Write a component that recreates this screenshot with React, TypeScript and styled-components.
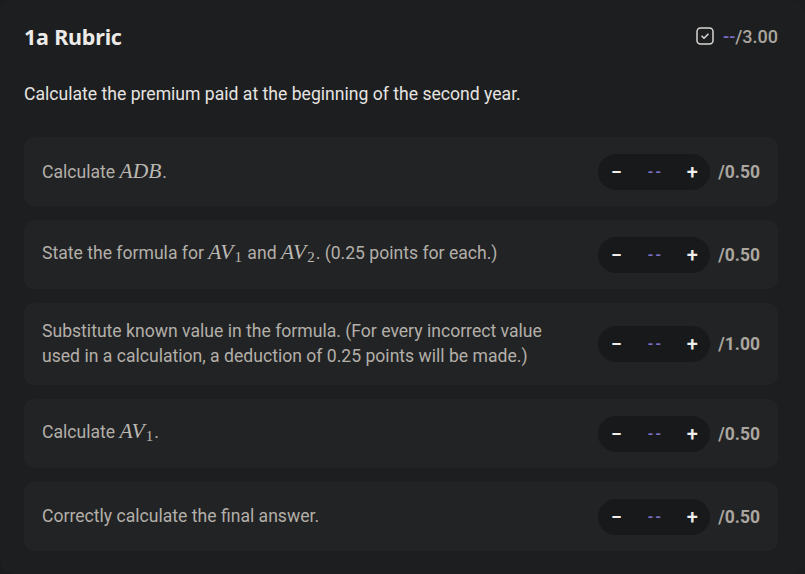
import React from "react";
import styled, { createGlobalStyle } from "styled-components";

interface ICriterion {
  text: React.ReactNode;
  max: string;
}

const GlobalStyle = createGlobalStyle`
  html, body {
    margin: 0;
    padding: 0;
    background: #1b1c1e;
  }
  body {
    font-family: Roboto, "Liberation Sans", sans-serif;
  }
`;

const Var: React.FC<{ name: string; sub?: string }> = ({ name, sub }) => (
  <MathVar>
    {name}
    {sub && <Sub>{sub}</Sub>}
  </MathVar>
);

const criteria: ICriterion[] = [
  {
    text: (
      <>
        Calculate <Var name="ADB" />.
      </>
    ),
    max: "0.50",
  },
  {
    text: (
      <>
        State the formula for <Var name="AV" sub="1" /> and <Var name="AV" sub="2" />. (0.25 points
        for each.)
      </>
    ),
    max: "0.50",
  },
  {
    text: (
      <>
        Substitute known value in the formula. (For every incorrect value
        <br />
        used in a calculation, a deduction of 0.25 points will be made.)
      </>
    ),
    max: "1.00",
  },
  {
    text: (
      <>
        Calculate <Var name="AV" sub="1" />.
      </>
    ),
    max: "0.50",
  },
  {
    text: <>Correctly calculate the final answer.</>,
    max: "0.50",
  },
];

const CheckIcon = () => (
  <svg width="18" height="18" viewBox="0 0 18 18" fill="none">
    <rect x="1" y="1" width="16" height="16" rx="3.5" stroke="#d8d6d2" strokeWidth="1.5" />
    <path d="M6 9.2l2 2 4-4" stroke="#d8d6d2" strokeWidth="1.6" strokeLinecap="round" strokeLinejoin="round" />
  </svg>
);

const App: React.FC = () => {
  return (
    <>
      <GlobalStyle />
      <Card>
        <Header>
          <Title>1a Rubric</Title>
          <Total>
            <CheckIcon />
            <span>
              <Dash>--</Dash>/3.00
            </span>
          </Total>
        </Header>

        <Question>Calculate the premium paid at the beginning of the second year.</Question>

        <List>
          {criteria.map((c, i) => (
            <Row key={i}>
              <RowText>{c.text}</RowText>
              <Score>
                <Stepper>
                  <StepButton>−</StepButton>
                  <Value>--</Value>
                  <StepButton>+</StepButton>
                </Stepper>
                <Max>/{c.max}</Max>
              </Score>
            </Row>
          ))}
        </List>
      </Card>
    </>
  );
};

export default App;

const Card = styled.div`
  width: 805px;
  height: 574px;
  box-sizing: border-box;
  background: #1d1e20;
  border-radius: 14px;
  padding: 21px 27px 0 24px;
  overflow: hidden;
`;

const Header = styled.div`
  display: flex;
  justify-content: space-between;
  align-items: center;
  height: 30px;
`;

const Title = styled.h1`
  margin: 0;
  font-family: "Noto Sans", Lato, sans-serif;
  font-weight: 700;
  font-size: 21.5px;
  color: #ecebe8;
  letter-spacing: -0.2px;
`;

const Total = styled.div`
  display: flex;
  align-items: center;
  gap: 9px;
  font-size: 18px;
  font-weight: 500;
  color: #aaa69f;
`;

const Dash = styled.span`
  color: #7b6cc4;
`;

const Question = styled.p`
  margin: 31px 0 0;
  font-size: 17.6px;
  color: #e6e4e0;
  line-height: 24px;
`;

const List = styled.div`
  display: flex;
  flex-direction: column;
  gap: 14px;
  margin-top: 31px;
`;

const Row = styled.div`
  display: flex;
  align-items: center;
  justify-content: space-between;
  min-height: 69px;
  box-sizing: border-box;
  padding: 16px 18px;
  background: #222325;
  border-radius: 10px;
`;

const RowText = styled.div`
  font-size: 17.6px;
  line-height: 25px;
  color: #b3afa9;
`;

const MathVar = styled.span`
  font-family: "Liberation Serif", "DejaVu Serif", serif;
  font-style: italic;
  font-size: 21.5px;
  color: #bcb8b2;
  margin-right: 1px;
`;

const Sub = styled.sub`
  font-style: normal;
  font-size: 15px;
  vertical-align: -3px;
  margin-left: 1px;
`;

const Score = styled.div`
  display: flex;
  align-items: center;
  gap: 8px;
  flex-shrink: 0;
`;

const Stepper = styled.div`
  display: flex;
  align-items: center;
  justify-content: space-between;
  width: 112px;
  height: 36px;
  box-sizing: border-box;
  padding: 0 10px 0 10px;
  background: #18191b;
  border-radius: 18px;
`;

const StepButton = styled.span`
  font-size: 20px;
  font-weight: 500;
  color: #f0efed;
  width: 16px;
  text-align: center;
`;

const Value = styled.span`
  font-size: 15px;
  font-weight: 700;
  color: #7b6cc4;
  letter-spacing: 2px;
  margin-left: 2px;
`;

const Max = styled.span`
  font-size: 17.5px;
  font-weight: 700;
  color: #aaa69f;
`;
